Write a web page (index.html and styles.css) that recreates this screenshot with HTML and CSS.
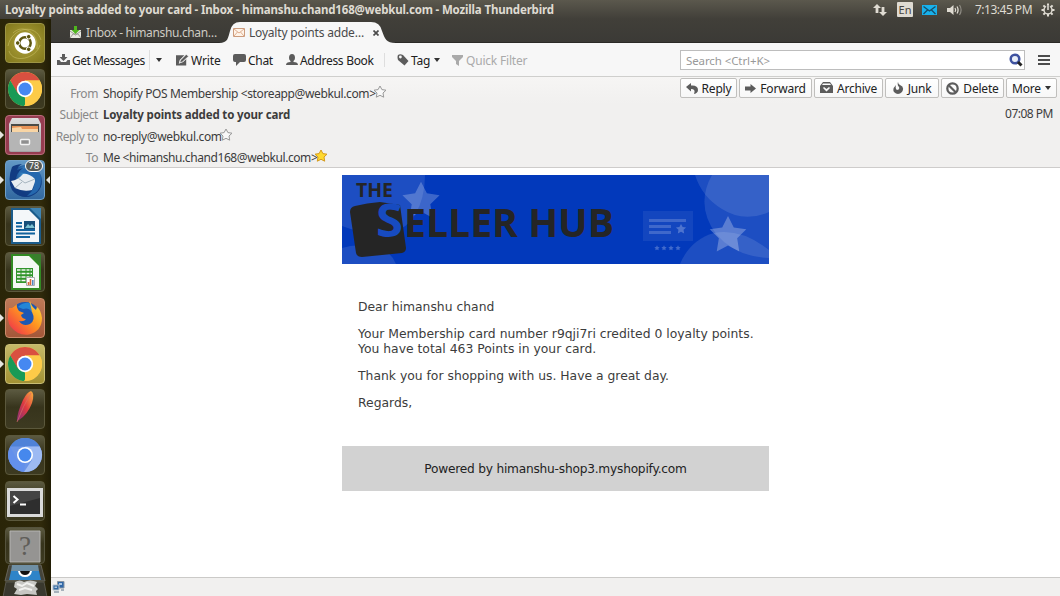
FILE: index.html
```
<!DOCTYPE html>
<html lang="en">
<head>
<meta charset="utf-8">
<title>Loyalty points added to your card - Mozilla Thunderbird</title>
<link rel="stylesheet" href="styles.css">
</head>
<body>
<svg width="0" height="0" class="defs">
  <defs>
    <path id="star" d="M0-6 1.9-2.4 6-1.8 3 1 3.7 5.2 0 3.3-3.7 5.2-3 1-6-1.8-1.9-2.4Z"/>
    <linearGradient id="metal" x2="0" y2="1"><stop stop-color="#dedede"/><stop offset="1" stop-color="#a2a2a2"/></linearGradient>
    <linearGradient id="feather" x1="1" x2="0" y2="1"><stop stop-color="#f9b23e"/><stop offset=".5" stop-color="#df3940"/><stop offset="1" stop-color="#7e2d78"/></linearGradient>
    <linearGradient id="fox" x1="1" x2="0" y2="1"><stop stop-color="#ffe33e"/><stop offset=".45" stop-color="#ff9520"/><stop offset="1" stop-color="#ed2352"/></linearGradient>
    <radialGradient id="bird" cx=".6" cy=".3"><stop stop-color="#58b8ef"/><stop offset="1" stop-color="#123f85"/></radialGradient>
    <symbol id="chrome" viewBox="0 0 34 34">
      <circle cx="17" cy="17" r="17" fill="#fdcb48"/>
      <path d="M17 17 9.4 21.4 2.3 8.5A17 17 0 0 1 31.7 8.5H17Z" fill="#d95040"/>
      <path d="M2.3 8.5 9.6 21 17 25.5 17 34A17 17 0 0 1 2.3 8.5" fill="#189a56"/>
      <path d="M17 8.5H31.7A17 17 0 0 1 16 34L24.4 21.2Z" fill="#fdcb48"/>
      <circle cx="17" cy="17" r="8.2" fill="#fff"/><circle cx="17" cy="17" r="6.5" fill="#4688f1"/>
    </symbol>
  </defs>
</svg>

<header class="panel">
  <div class="window-title">Loyalty points added to your card - Inbox - himanshu.chand168@webkul.com - Mozilla Thunderbird</div>
  <div class="tray">
    <svg class="net" width="14" height="12" viewBox="0 0 14 12"><path d="M4 0 8 4H5.4V9H2.6V4H0ZM10 12 6 8H8.6V3H11.4V8H14Z" fill="#dfdbd2"/></svg>
    <span class="lang">En</span>
    <svg class="mail" width="15" height="10" viewBox="0 0 15 10"><path fill="#18b1ec" d="M0 0H15V10H0Z"/><path d="M1.5 1.5 7.5 6 13.5 1.5M1.5 9 5.5 5M13.5 9 9.5 5" fill="none" stroke="#174d68" stroke-width="1.3"/></svg>
    <svg class="sound" width="16" height="12" viewBox="0 0 16 12"><path d="M0 4H3L6.5 1V11L3 8H0Z" fill="#dfdbd2"/><path d="M8 4Q9.4 6 8 8M10 2.5Q12.2 6 10 9.5" fill="none" stroke="#dfdbd2" stroke-width="1.3"/><path d="M12.5 1Q15.7 6 12.5 11" fill="none" stroke="#8f8c84" stroke-width="1.2"/></svg>
    <span class="clock">7:13:45 PM</span>
    <svg class="gear" width="14" height="14" viewBox="0 0 14 14"><path d="M7 .5V3M7 11V13.5M.5 7H3M11 7H13.5M2.4 2.4 4 4M10 10 11.6 11.6M2.4 11.6 4 10M10 4 11.6 2.4" stroke="#dfdbd2" stroke-width="2"/><circle cx="7" cy="7" r="4" fill="none" stroke="#dfdbd2" stroke-width="1.5"/><path d="M7 2V6.5" stroke="#4b4942" stroke-width="3.6"/><path d="M7 1.5V7" stroke="#dfdbd2" stroke-width="1.6"/></svg>
  </div>
</header>

<div class="desktop">
  <nav class="launcher">
    <div class="tile dash"><svg viewBox="0 0 40 40"><path d="M3 23C7 4 31 0 36 17M4 28C8 41 31 36 35 22M8 10C18 0 34 10 32 26" fill="none" stroke="#cfc66c" stroke-opacity=".5"/><circle cx="20" cy="20" r="10.7" fill="#fff"/><circle cx="20" cy="20" r="5.7" fill="none" stroke="#5d5610" stroke-width="2.5"/><g fill="#5d5610" stroke="#fff"><circle cx="12.7" cy="20" r="2.3"/><circle cx="23.7" cy="13.7" r="2.3"/><circle cx="23.7" cy="26.3" r="2.3"/></g></svg></div>
    <div class="tile"><svg viewBox="0 0 40 40"><use href="#chrome" x="3" y="3" width="34" height="34"/></svg></div>
    <div class="tile files run"><svg viewBox="0 0 40 40"><path d="M7 3H33L36 9V35Q36 37 34 37H6Q4 37 4 35V9Z" fill="url(#metal)"/><path d="M6 9H34V17H6Z" fill="#4b4b47"/><path d="M7 11H33V16H7Z" fill="#e89458"/><path d="M7 13 16 12 17 14H33V17H7Z" fill="#f8d5a5"/><path d="M5 17H35V36H5Z" fill="#b5b5b5"/><rect x="15.5" y="24.5" width="9" height="5" rx="1" fill="#8f8f8f" stroke="#f2f2f2" stroke-width="1.5"/></svg></div>
    <div class="tile bird run focus"><svg viewBox="0 0 40 40"><circle cx="21" cy="21" r="16" fill="url(#bird)"/><path d="M7 7Q2 20 7 30Q14 39 26 36Q13 31 11 21Q10 14 18 8L12 10Q13 6 17 4Q9 5 7 7" fill="#123b82"/><path d="M6 21Q13 20 18 14Q26 13 31 19L27 30Q18 32 10 28Z" fill="#e8edf1"/><path d="M13 18 20 23 30 19M10 28 17 22" fill="none" stroke="#a6b5bf"/><path d="M14 12Q22 4 32 11Q38 17 35 27Q31 35 22 36Q31 29 30 19Q26 14 14 12" fill="#2568ae"/></svg><span class="count">78</span></div>
    <div class="tile"><svg viewBox="0 0 40 40"><path d="M6 2H27L36 12V38H6Z" fill="#1b5c8b"/><path d="M8 4H24L34 14V36H8Z" fill="#f4f7f9"/><path d="M25 2H36V13Z" fill="#3f85b4"/><path d="M11 17H17M11 20.5H17M11 24H30M11 27.5H30M11 31H25" stroke="#11639d" stroke-width="2"/><path d="M19 15H30V23H19Z" fill="#174f78"/><path d="M20 22 23 18 25 20 27 18 30 22Z" fill="#7cc2d1"/></svg></div>
    <div class="tile"><svg viewBox="0 0 40 40"><path d="M6 2H27L36 12V38H6Z" fill="#328a22"/><path d="M8 4H24L34 14V36H8Z" fill="#f5f8f4"/><path d="M25 2H36V13Z" fill="#397e2c"/><path d="M11 16H28V31H11Z" fill="#31952a"/><path d="M12 18H27M12 21.5H27M12 25H27M12 28.5H27" stroke="#f5f8f4" stroke-width="1.6"/><path d="M16 16V31M21 16V31M25 16V31" stroke="#31952a"/><path d="M21.5 25.5H29.5V33.5H21.5Z" fill="#fff" stroke="#aaa"/><path d="M23.5 30V33M25.5 27V33" stroke="#d66639" stroke-width="1.6"/><path d="M27.8 28V33" stroke="#3f79b9" stroke-width="1.4"/></svg></div>
    <div class="tile firefox run"><svg viewBox="0 0 40 40"><circle cx="20" cy="20" r="16" fill="#1d58b4"/><path d="M25 3Q22 9 27 14Q31 22 25 26Q18 29 14 23Q19 24 21 21Q17 21 16 17L19 15 14 13Q11 9 12 6L7 10 4 10Q1 23 6 29Q13 38 24 36.5Q37 33 37 20Q36 12 32 9L31 12Q26 8 25 3" fill="url(#fox)"/><path d="M13 9Q18 4 25 5L27 14Q24 9 18 11Z" fill="#2586d6"/></svg></div>
    <div class="tile gold run"><svg viewBox="0 0 40 40"><use href="#chrome" x="3" y="3" width="34" height="34"/></svg></div>
    <div class="tile"><svg viewBox="0 0 40 40"><path d="M26 2Q30 4 27 14Q23 25 14 31L12 32Q12 24 18 11Q22 3 26 2" fill="url(#feather)"/><path d="M26 4Q18 17 12 33" fill="none" stroke="#d86b67" stroke-width=".7"/></svg></div>
    <div class="tile"><svg viewBox="0 0 40 40"><circle cx="20" cy="20" r="17" fill="#6c95e7"/><path d="M5.3 11.5A17 17 0 0 1 34.7 11.5H20Z" fill="#4f82d8"/><path d="M5.3 11.5 12 25 20 28 19 37A17 17 0 0 1 5.3 11.5" fill="#6390ec"/><path d="M20 11.5H34.7A17 17 0 0 1 19 37L27 25Z" fill="#9dbaf3"/><circle cx="20" cy="20" r="8" fill="#fff"/><circle cx="20" cy="20" r="6.4" fill="#4688ed"/></svg></div>
    <div class="tile"><svg viewBox="0 0 40 40"><path d="M2 7H38V36H2Z" fill="#dadada"/><path d="M5 10H35V33H5Z" fill="#2e2e2e"/><path d="M5 10H35V17L5 25Z" fill="#444"/><path d="M8.5 15 12.5 18.5 8.5 22M15 23.5H21" fill="none" stroke="#fff" stroke-width="2"/></svg></div>
    <div class="tile unknown"><svg viewBox="0 0 40 37"><path d="M5 4H35V35H5Z" fill="#959492" stroke="#b5b4b1"/><text x="20" y="28" text-anchor="middle" class="question">?</text></svg></div>
    <div class="folded"><svg viewBox="0 0 46 34"><path d="M7 2H39L43 18H3Z" fill="#45443a" stroke="#66645a"/><path d="M10 2H36L37 8H9Z" fill="#6f8fa4"/><path d="M9 8H37L39 17H7Z" fill="#2e84c8"/><path d="M16 8H30Q29 14 23 14Q17 14 16 8" fill="#fff"/><path d="M18 8H28Q27 12 23 12Q19 12 18 8" fill="#111"/><path d="M4 19H42L45 34H1Z" fill="#39382e" stroke="#57564c"/><path d="M13 19Q18 16 22 19Q28 16 35 19L33 23 36 26 34 28 35 32 25 31 19 32 12 31 15 26 12 24Z" fill="#c7c7c3"/><path d="M15 21 20 23 25 20 32 23M17 27 23 25 30 27" fill="none" stroke="#f2f2ef" stroke-width="2"/></svg></div>
  </nav>

  <main class="window">
    <div class="tabs">
      <div class="tab"><svg width="13" height="13" viewBox="0 0 13 13"><path d="M1 4H12V12H1Z" fill="#e9e9e1"/><path d="M1 12 4 8H9L12 12M1 5 6.5 9 12 5" stroke="#9b9b91" fill="none"/><path d="M5 0H8V4H10.5L6.5 8 2.5 4H5Z" fill="#4fb61d"/></svg><span>Inbox - himanshu.chan…</span></div>
      <div class="tab active">
        <svg class="shape" width="177" height="21" viewBox="0 0 177 21"><path d="M0 21C9 21 9 16 11 9Q13 0 21 0H152Q161 0 163 9C166 17 167 21 177 21Z" fill="#f7f7f7"/></svg>
        <svg width="12" height="9" viewBox="0 0 12 9"><path d="M.5.5H11.5V8.5H.5Z" fill="#fff4e9" stroke="#cc9b7c"/><path d="M1 1 6 5 11 1M1 8 4.5 4M11 8 7.5 4" fill="none" stroke="#dfaf91"/></svg>
        <span>Loyalty points adde…</span>
        <svg class="close" width="6" height="6" viewBox="0 0 6 6"><path d="M.5.5 5.5 5.5M5.5.5.5 5.5" stroke="#4b4b4b" stroke-width="1.7"/></svg>
      </div>
    </div>

    <div class="toolbar">
      <div class="tool get"><svg width="13" height="12" viewBox="0 0 13 12"><path d="M5 0H8V3H10.5L6.5 7 2.5 3H5Z"/><path d="M0 6H2.5L4 8H9L10.5 6H13V11H0Z"/></svg><span>Get Messages</span></div>
      <i class="sep"></i><i class="caret first"></i>
      <div class="tool write"><svg width="13" height="12" viewBox="0 0 14 12"><path d="M0 1H9L4 6 3 10 8 8 11 5V12H0Z"/><path d="M11 0 13.5 2 7 8 4 9 5 6Z" stroke="#f7f7f7" stroke-width=".6"/></svg><span>Write</span></div>
      <div class="tool chat"><svg width="13" height="12" viewBox="0 0 13 12"><path d="M2 0H11Q13 0 13 2V6Q13 8 11 8H7L3 12V8H2Q0 8 0 6V2Q0 0 2 0"/></svg><span>Chat</span></div>
      <div class="tool book"><svg width="12" height="12" viewBox="0 0 12 12"><path d="M6 0Q9 0 9 4Q9 6 7.5 7V8Q12 8 12 11H0Q0 8 4.5 8V7Q3 6 3 4Q3 0 6 0"/></svg><span>Address Book</span></div>
      <i class="sep two"></i>
      <div class="tool tag"><svg width="12" height="12" viewBox="0 0 12 12"><path fill-rule="evenodd" d="M1 1Q3-.5 6 1L11.5 7 7.5 11.5 1 6Q0 3 1 1M2 3A1.4 1.4 0 1 0 4.8 3A1.4 1.4 0 1 0 2 3"/></svg><span>Tag</span></div>
      <i class="caret"></i>
      <div class="tool filter"><svg width="11" height="11" viewBox="0 0 11 11"><path d="M0 0H11V2L7 6V11L4 9V6L0 2Z"/></svg><span>Quick Filter</span></div>
      <div class="search"><span>Search &lt;Ctrl+K&gt;</span><svg width="14" height="14" viewBox="0 0 14 14"><circle cx="6" cy="6" r="4.3" fill="#e9eff8" stroke="#3e52a0" stroke-width="2.5"/><path d="M9 9 12.5 12.5" stroke="#222" stroke-width="3"/></svg></div>
      <div class="menu"><i></i><i></i><i></i></div>
    </div>

    <section class="message-head">
      <dl class="fields">
        <dt>From</dt><dd><span class="w1">Shopify POS Membership &lt;storeapp@webkul.com&gt;</span><svg class="star" viewBox="-7 -7 14 14"><use href="#star"/></svg></dd>
        <dt>Subject</dt><dd><b>Loyalty points added to your card</b></dd>
        <dt>Reply to</dt><dd><span class="w2">no-reply@webkul.com</span><svg class="star" viewBox="-7 -7 14 14"><use href="#star"/></svg></dd>
        <dt>To</dt><dd><span class="w3">Me &lt;himanshu.chand168@webkul.com&gt;</span><svg class="star on" viewBox="-7 -7 14 14"><use href="#star"/></svg></dd>
      </dl>
      <div class="side">
        <div class="actions">
          <button><svg width="12" height="11" viewBox="0 0 12 11"><path d="M0 4 5 0V2.5Q12 2 12 7Q12 10 8 11Q10 6 5 6V8.5Z"/></svg>Reply</button>
          <button><svg width="11" height="9" viewBox="0 0 11 9"><path d="M0 2.5H5.5V0L11 4.5 5.5 9V6.5H0Z"/></svg>Forward</button>
          <button><svg width="13" height="12" viewBox="0 0 13 12"><path fill-rule="evenodd" d="M3 0H10L13 4V11H0V4ZM3 1.5 2 3H11L10 1.5ZM3 6 6.5 9.5 10 6 9 5 6.5 7 4 5Z"/></svg>Archive</button>
          <button><svg width="11" height="12" viewBox="0 0 11 12"><path d="M5 0Q4 3 6 5Q7 8 4 8Q2 7 3 3Q-1 7 1 10Q5 14 9 10Q12 5 7 3Q5 2 5 0"/></svg>Junk</button>
          <button><svg width="13" height="13" viewBox="0 0 12 12"><circle cx="6" cy="6" r="4.8" fill="none" stroke="#5c5c5c" stroke-width="2.1"/><path d="M2.5 3 9 9.5" stroke="#5c5c5c" stroke-width="2"/></svg>Delete</button>
          <button>More<i class="caret"></i></button>
        </div>
        <time>07:08 PM</time>
      </div>
    </section>

    <article class="mail-body">
      <svg class="banner" viewBox="0 0 427 89">
        <path fill="#0239bb" d="M0 0H427V89H0Z"/>
        <g fill="#fff">
          <path fill-opacity=".11" d="M0 0H83Q83 23 73 40Q65 54 49 57Q25 61 0 51ZM0 73Q15 68 31 72Q49 75 54 89H0Z"/>
          <path fill-opacity=".11" d="M353 0H427V37Q402 48 380 34Q360 22 353 0"/>
          <path fill-opacity=".11" d="M370 0H427V83Q394 82 374 59Q353 30 370 0"/>
          <path fill-opacity=".11" d="M338 89Q348 65 372 58Q399 53 427 75V89Z"/>
          <use href="#star" fill-opacity=".23" transform="translate(79 26) scale(3.1 3.2)"/>
          <use href="#star" fill-opacity=".27" transform="translate(386 60) scale(3.05 3.15)"/>
          <path fill-opacity=".07" d="M301 36H351V66H301Z"/>
          <path fill-opacity=".19" d="M307 44H344V47H307ZM307 50H329V53H307ZM307 56H329V59H307Z"/>
          <g fill-opacity=".25"><use href="#star" transform="translate(339 54) scale(.85)"/><use href="#star" transform="translate(315 73) scale(.45)"/><use href="#star" transform="translate(322 73) scale(.45)"/><use href="#star" transform="translate(329 73) scale(.45)"/><use href="#star" transform="translate(336 73) scale(.45)"/></g>
        </g>
        <path d="M13 31Q25 28 38 27L58 30 64 73Q64 77 60 78L20 82Q15 82 14 78L8 37Q8 32 13 31" fill="#252525"/>
        <text x="14" y="22" class="the" textLength="37" lengthAdjust="spacingAndGlyphs">THE</text>
        <text x="34" y="62" class="big-s" textLength="27" lengthAdjust="spacingAndGlyphs">S</text>
        <text x="62" y="62" class="hub" textLength="210" lengthAdjust="spacingAndGlyphs">ELLER HUB</text>
      </svg>
      <div class="copy">
        <p>Dear himanshu chand</p>
        <p>Your Membership card number r9qji7ri credited 0 loyalty points.<br>You have total 463 Points in your card.</p>
        <p>Thank you for shopping with us. Have a great day.</p>
        <p>Regards,</p>
      </div>
      <footer>Powered by himanshu-shop3.myshopify.com</footer>
    </article>

    <div class="status"><svg width="13" height="13" viewBox="0 0 13 13"><path d="M5.5 1.5H12V8H5.5Z" fill="#2f67a8" stroke="#8794a2"/><path d="M7 3H10V5H7Z" fill="#a9c5e2"/><path d="M1 5H7V10H1Z" fill="#34699f" stroke="#b4bfca"/><path d="M2.5 6.5H5V8H2.5Z" fill="#a9c5e2"/><path d="M2 12H7M9 10H12" stroke="#8f9cab" stroke-width="1.5"/></svg></div>
  </main>
</div>
</body>
</html>
```
FILE: styles.css
```
* {
  box-sizing: border-box;
}
body {
  margin: 0;
  height: 596px;
  overflow: hidden;
  display: flex;
  flex-direction: column;
  font: 12px "Noto Sans", "Open Sans", sans-serif;
  color: #3c3c3c;
  background: #fff;
}
svg {
  flex: none;
  display: block;
}
.defs {
  position: absolute;
}
.panel {
  height: 19px;
  flex: none;
  display: flex;
  justify-content: space-between;
  align-items: center;
  padding: 0 5px;
  color: #dfdbd2;
  background: linear-gradient(#5b584d, #413f39);
  white-space: nowrap;
}
.window-title {
  font-weight: bold;
  font-size: 11.5px;
  letter-spacing: -.16px;
}
.tray {
  display: flex;
  align-items: center;
}
.lang {
  width: 16px;
  height: 15px;
  margin: 0 9px 0 10px;
  border-radius: 1px;
  background: #dfdbd2;
  color: #46443f;
  font-size: 11px;
  line-height: 15px;
  text-align: center;
}
.sound {
  margin-left: 10px;
}
.clock {
  width: 57px;
  margin: 0 9px 0 12px;
  letter-spacing: -.5px;
}
.desktop {
  flex: 1;
  display: flex;
  min-height: 0;
}

/* launcher */
.launcher {
  width: 51px;
  flex: none;
  display: flex;
  flex-direction: column;
  align-items: center;
  gap: 5.8px;
  padding: 4px 1px 0 0;
  background: linear-gradient(90deg, #2a2508, #302a0b 80%, #211d06);
}
.tile {
  position: relative;
  width: 40px;
  height: 40px;
  flex: none;
  border: 1px solid #5b583c;
  border-radius: 4px;
  background: linear-gradient(#5b5940, #37341c 45%, #3d3a21);
}
.tile > svg {
  width: 40px;
  height: 40px;
  margin: -1px;
}
.dash {
  background: radial-gradient(#b0a43b, #81771c);
  border-color: #9d9544;
}
.files {
  background: #963c50;
  border-color: #b86b7a;
}
.bird {
  background: linear-gradient(#6298c5, #3268a0);
  border-color: #70a0c8;
}
.firefox {
  background: linear-gradient(#bd7957, #a45739);
  border-color: #ca8b6b;
}
.gold {
  background: linear-gradient(#c5b968, #a39234);
  border-color: #c8bd74;
}
.unknown {
  height: 37px;
  border-color: #55533d;
}
.tile.unknown > svg {
  height: 37px;
}
.question {
  font: 27px "Liberation Serif", serif;
  fill: #5f5d59;
}
.run::before, .focus::after {
  content: "";
  position: absolute;
  left: -6px;
  top: 15px;
  border: 4px solid transparent;
  border-left-color: #e5e5df;
  border-right-width: 0;
}
.focus::after {
  left: auto;
  right: -6px;
  border-width: 4px 4px 4px 0;
  border-right-color: #e5e5df;
}
.count {
  position: absolute;
  right: 1px;
  top: -1px;
  width: 18px;
  height: 12px;
  border: 1.5px solid #fff;
  border-radius: 6px;
  background: #555957;
  color: #fff;
  font-size: 9px;
  line-height: 9px;
  text-align: center;
}
.folded {
  width: 46px;
  height: 34px;
  margin-top: -7px;
}

/* thunderbird */
.window {
  flex: 1;
  display: flex;
  flex-direction: column;
  min-width: 0;
}
.tabs {
  height: 24px;
  flex: none;
  display: flex;
  background: linear-gradient(#413f39, #3b3a36);
  border-bottom: 1px solid #2b2a27;
  padding-left: 18px;
}
.tab {
  position: relative;
  width: 164px;
  height: 21px;
  margin-top: 3px;
  display: flex;
  align-items: center;
  gap: 4px;
  color: #cecbc3;
  white-space: nowrap;
  letter-spacing: -.36px;
}
.tab.active {
  color: #4a4a4a;
  letter-spacing: -.2px;
}
.tab > * {
  position: relative;
}
.tab .shape {
  position: absolute;
  left: -14px;
  top: 0;
}
.tab .close {
  margin-left: 5px;
}
.toolbar {
  height: 34px;
  flex: none;
  display: flex;
  align-items: center;
  padding: 1px 0 0 6px;
  background: #f7f7f7;
  border-bottom: 1px solid #cfcfcd;
  white-space: nowrap;
}
.tool {
  display: flex;
  align-items: center;
  gap: 3px;
  flex: none;
  color: #202020;
}
.tool svg, button svg {
  fill: #5c5c5c;
}
.get { width: 92px; gap: 2px; letter-spacing: -.5px; }
.write { width: 57px; gap: 2px; letter-spacing: -.1px; }
.chat { width: 53px; gap: 2px; letter-spacing: -.3px; }
.book { width: 98px; gap: 2px; letter-spacing: -.3px; }
.tag {
  width: 37px;
  gap: 2px;
  letter-spacing: -.2px;
}
.filter {
  width: 229px;
  color: #aaa;
  letter-spacing: -.2px;
}
.filter svg {
  fill: #aaa;
}
.sep {
  width: 1px;
  height: 20px;
  background: #dedede;
}
.sep.two {
  height: 14px;
  margin-right: 12px;
}
.caret {
  width: 6px;
  border: 3px solid transparent;
  border-top: 4px solid #333;
  border-bottom: 0;
}
.toolbar .caret {
  margin-right: 12px;
}
.toolbar .caret.first {
  margin: 0 14px 0 6px;
}
.search {
  width: 345px;
  height: 20px;
  flex: none;
  display: flex;
  align-items: center;
  justify-content: space-between;
  padding: 0 1px 0 5px;
  margin-left: -1px;
  border: 1px solid #bdbdbd;
  background: #fff;
  color: #999;
  font-size: 11.5px;
  letter-spacing: -.1px;
}
.menu {
  width: 12px;
  display: grid;
  gap: 2px;
  margin-left: 13px;
}
.menu i {
  height: 2px;
  background: #4c4c4c;
}
.message-head {
  height: 91px;
  flex: none;
  display: flex;
  justify-content: space-between;
  background: linear-gradient(#f6f5f4, #f1f0ef 30%);
  border-bottom: 1px solid #cecccb;
}
.fields {
  margin: 6px 0 0;
  display: grid;
  grid-template-columns: 47px 1fr;
  grid-auto-rows: 21.3px;
  column-gap: 5px;
  align-items: center;
  white-space: nowrap;
}
dt {
  color: #888;
  text-align: right;
  letter-spacing: -.4px;
}
dd {
  margin: 0;
  display: flex;
  align-items: center;
}
dd b {
  font-size: 11.5px;
  letter-spacing: -.15px;
}
.w1 { width: 270px; letter-spacing: -.37px; }
.w2 { width: 116px; letter-spacing: -.35px; }
.w3 { width: 211px; letter-spacing: -.42px; }
.star {
  width: 14px;
  height: 14px;
  margin-top: -3px;
  fill: #f8f8f8;
  stroke: #999;
}
.star.on {
  fill: #ffd92e;
  stroke: #d59a1c;
}
.side {
  padding: 1px 3px 0 0;
}
.actions {
  display: grid;
  grid-template-columns: 57px 73px 69px 54px 63px 51px;
  gap: 2px;
}
button {
  height: 20px;
  display: flex;
  align-items: center;
  justify-content: center;
  gap: 4px;
  padding: 0;
  border: 1px solid #c0bfbd;
  border-radius: 2px;
  background: linear-gradient(#fff, #f7f7f7);
  font: inherit;
  color: #222;
  letter-spacing: -.2px;
}
time {
  display: block;
  margin: 7px 4px 0 0;
  text-align: right;
  letter-spacing: -.5px;
}
.mail-body {
  flex: 1;
  padding: 7px 0 0 291px;
  font: 12.36px/14.8px "DejaVu Sans", sans-serif;
}
.banner {
  width: 427px;
  height: 89px;
}
.the, .hub, .big-s {
  font: bold 19px "Open Sans", sans-serif;
  fill: #252525;
}
.hub {
  font-size: 39px;
}
.big-s {
  font-size: 47px;
  fill: #174bc0;
}
.copy {
  width: 427px;
  height: 182px;
  padding: 36.4px 0 0 16px;
  white-space: nowrap;
}
.copy p {
  margin: 0 0 12.3px;
}
.mail-body footer {
  width: 427px;
  height: 45px;
  line-height: 46px;
  text-align: center;
  background: #d2d2d2;
  color: #222;
  font-size: 12.2px;
  letter-spacing: -.22px;
}
.status {
  height: 19px;
  flex: none;
  padding: 2px 1px;
  background: #f1f0ef;
  border-top: 1px solid #cbcac8;
}
```
